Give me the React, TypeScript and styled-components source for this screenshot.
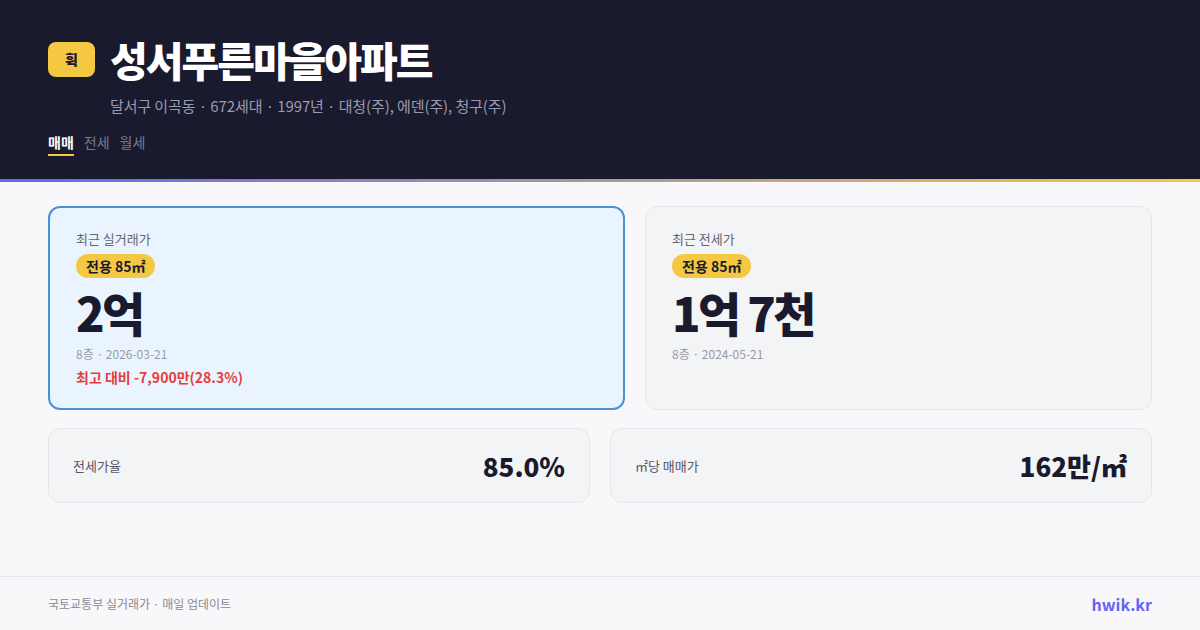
import styled, { createGlobalStyle } from "styled-components";

const GlobalStyle = createGlobalStyle`
  * { box-sizing: border-box; }
  body {
    margin: 0;
    background: #f8f8fa;
    font-family: "Noto Sans CJK KR", "Noto Sans", sans-serif;
    color: #1a1a2e;
  }
`;

const Page = styled.div`
  display: flex;
  flex-direction: column;
  width: 1200px;
  height: 630px;
  overflow: hidden;
`;

const Header = styled.header`
  background: #1a1a2e;
  height: 179px;
  padding: 33px 48px 0;
`;

const AccentLine = styled.div`
  height: 3px;
  background: linear-gradient(90deg, #6366f1, #f5c842);
`;

const TitleRow = styled.div`
  display: flex;
  align-items: center;
  gap: 15px;
`;

const Logo = styled.div`
  width: 47px;
  height: 35px;
  border-radius: 8px;
  background: #f5c842;
  color: #1a1a2e;
  font-weight: 900;
  font-size: 14px;
  display: flex;
  align-items: center;
  justify-content: center;
`;

const Title = styled.h1`
  margin: 0;
  color: #ffffff;
  font-size: 41px;
  font-weight: 900;
  letter-spacing: -2px;
  line-height: 52px;
`;

const Subtitle = styled.div`
  margin: 11px 0 0 62px;
  color: #9a9ab0;
  font-size: 15px;
  line-height: 20px;
  letter-spacing: -0.1px;
`;

const Tabs = styled.div`
  display: flex;
  gap: 10px;
  margin-top: 17px;
`;

const Tab = styled.span<{ $active?: boolean }>`
  font-size: 14px;
  line-height: 19px;
  padding-bottom: 2px;
  color: ${p => (p.$active ? "#ffffff" : "#7a7a90")};
  font-weight: ${p => (p.$active ? 700 : 400)};
  border-bottom: 2px solid ${p => (p.$active ? "#f5c842" : "transparent")};
`;

const Main = styled.main`
  flex: 1;
  padding: 24px 48px 0;
`;

const TopGrid = styled.div`
  display: grid;
  grid-template-columns: 577px 1fr;
  gap: 20px;
`;

const PriceCard = styled.div<{ $highlight?: boolean }>`
  height: 204px;
  border-radius: 12px;
  padding: ${p => (p.$highlight ? "24px 26px" : "25px 26px")};
  background: ${p => (p.$highlight ? "#eaf4ff" : "#f3f4f6")};
  border: ${p => (p.$highlight ? "2px solid #4a90d9" : "1px solid #e5e7eb")};
`;

const CardLabel = styled.div`
  font-size: 13px;
  color: #666673;
  line-height: 14px;
`;

const Pill = styled.span`
  display: inline-block;
  margin-top: 8px;
  padding: 0 10px;
  height: 24px;
  line-height: 24px;
  border-radius: 12px;
  background: #f5c842;
  color: #1a1a2e;
  font-size: 14px;
  font-weight: 700;
`;

const BigPrice = styled.div`
  font-size: 47px;
  font-weight: 900;
  letter-spacing: -2.5px;
  line-height: 68px;
  color: #1a1a2e;
`;

const Meta = styled.div`
  font-size: 12px;
  color: #9a9aa6;
  line-height: 16px;
`;

const Diff = styled.div`
  margin-top: 6px;
  font-size: 14px;
  font-weight: 700;
  color: #e53e3e;
  line-height: 18px;
`;

const StatGrid = styled.div`
  display: grid;
  grid-template-columns: 1fr 1fr;
  gap: 20px;
  margin-top: 18px;
`;

const StatCard = styled.div`
  height: 75px;
  border-radius: 12px;
  background: #f3f4f6;
  border: 1px solid #e5e7eb;
  padding: 0 24px;
  display: flex;
  align-items: center;
  justify-content: space-between;
`;

const StatLabel = styled.span`
  font-size: 13px;
  color: #555566;
`;

const StatValue = styled.span`
  font-size: 26px;
  font-weight: 800;
  color: #1a1a2e;
`;

const Footer = styled.footer`
  height: 54px;
  border-top: 1px solid #e5e7eb;
  padding: 0 48px;
  display: flex;
  align-items: center;
  justify-content: space-between;
`;

const FooterText = styled.span`
  font-size: 12px;
  color: #8a8a96;
`;

const Brand = styled.span`
  font-size: 16px;
  font-weight: 700;
  color: #6366f1;
`;

export default function App() {
  return (
    <Page>
      <GlobalStyle />
      <Header>
        <TitleRow>
          <Logo>휙</Logo>
          <Title>성서푸른마을아파트</Title>
        </TitleRow>
        <Subtitle>달서구 이곡동 · 672세대 · 1997년 · 대청(주), 에덴(주), 청구(주)</Subtitle>
        <Tabs>
          <Tab $active>매매</Tab>
          <Tab>전세</Tab>
          <Tab>월세</Tab>
        </Tabs>
      </Header>
      <AccentLine />
      <Main>
        <TopGrid>
          <PriceCard $highlight>
            <CardLabel>최근 실거래가</CardLabel>
            <Pill>전용 85㎡</Pill>
            <BigPrice>2억</BigPrice>
            <Meta>8층 · 2026-03-21</Meta>
            <Diff>최고 대비 -7,900만(28.3%)</Diff>
          </PriceCard>
          <PriceCard>
            <CardLabel>최근 전세가</CardLabel>
            <Pill>전용 85㎡</Pill>
            <BigPrice>1억 7천</BigPrice>
            <Meta>8층 · 2024-05-21</Meta>
          </PriceCard>
        </TopGrid>
        <StatGrid>
          <StatCard>
            <StatLabel>전세가율</StatLabel>
            <StatValue>85.0%</StatValue>
          </StatCard>
          <StatCard>
            <StatLabel>㎡당 매매가</StatLabel>
            <StatValue>162만/㎡</StatValue>
          </StatCard>
        </StatGrid>
      </Main>
      <Footer>
        <FooterText>국토교통부 실거래가 · 매일 업데이트</FooterText>
        <Brand>hwik.kr</Brand>
      </Footer>
    </Page>
  );
}
